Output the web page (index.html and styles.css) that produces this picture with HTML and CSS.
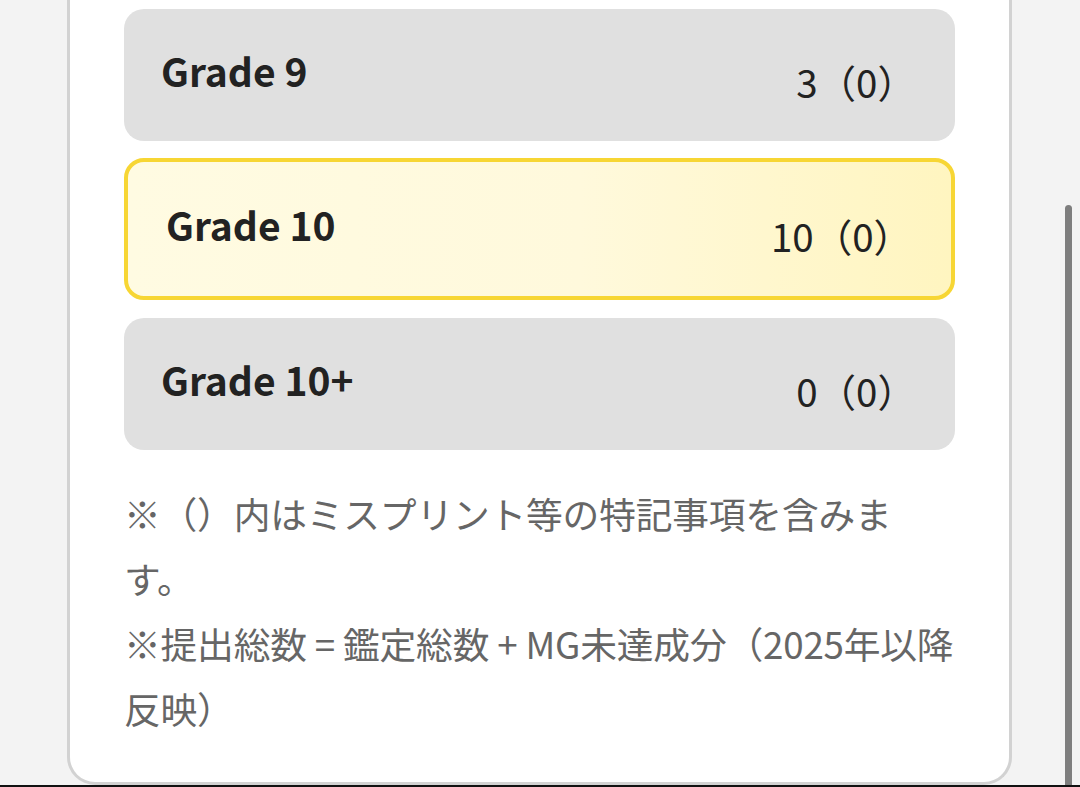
FILE: index.html
```html
<!DOCTYPE html>
<html lang="ja">
<head>
    <meta charset="UTF-8">
    <meta name="viewport" content="width=device-width, initial-scale=1.0">
    <title>Grade Breakdown</title>
    <link rel="stylesheet" href="styles.css">
</head>
<body>
    <div class="screen">
        <div class="panel">
            <ul class="grade-list">
                <li class="grade-row">
                    <span class="grade-name">Grade 9</span>
                    <span class="grade-count">3（0）</span>
                </li>
                <li class="grade-row is-current">
                    <span class="grade-name">Grade 10</span>
                    <span class="grade-count">10（0）</span>
                </li>
                <li class="grade-row">
                    <span class="grade-name">Grade 10+</span>
                    <span class="grade-count">0（0）</span>
                </li>
            </ul>

            <div class="notes">
                <p>※（）内はミスプリント等の特記事項を含みます。</p>
                <p>※提出総数 = 鑑定総数 + MG未達成分（2025年以降反映）</p>
            </div>
        </div>

        <div class="scroll-thumb"></div>
    </div>
    <div class="nav-edge"></div>
</body>
</html>
```

FILE: styles.css
```css
body {
    margin: 0;
    font-family: "Noto Sans CJK JP", "Noto Sans", sans-serif;
    color: #222222;
    background-color: #f3f3f3;
}

.screen {
    position: relative;
    height: 785px;
    overflow: hidden;
}

.panel {
    box-sizing: border-box;
    width: 945px;
    height: 785px;
    margin-left: 67px;
    padding: 9px 54px 0;
    background-color: #ffffff;
    border: 3px solid #d2d2d2;
    border-top: none;
    border-radius: 0 0 28px 28px;
}

.grade-list {
    list-style: none;
    margin: 0;
    padding: 0;
    display: flex;
    flex-direction: column;
    gap: 17px;
}

.grade-row {
    box-sizing: border-box;
    height: 132px;
    padding: 0 39px 0 37px;
    display: flex;
    justify-content: space-between;
    align-items: center;
    background-color: #e0e0e0;
    border-radius: 20px;
}

.grade-row.is-current {
    height: 142px;
    padding: 0 39px 0 38px;
    background: linear-gradient(90deg, #fffbe2 0%, #fff9dc 55%, #fff5c0 100%);
    border: 4px solid #f7d634;
}

.grade-row.is-current + .grade-row {
    margin-top: 1px;
}

.grade-name {
    font-size: 39px;
    font-weight: 700;
    line-height: 1.2;
    padding-bottom: 10px;
}

.grade-count {
    font-size: 38.5px;
    font-weight: 400;
    line-height: 1.2;
    padding-top: 13px;
}

.notes {
    margin-top: 31px;
    font-size: 36.75px;
    line-height: 65px;
    letter-spacing: -0.2px;
    text-spacing-trim: space-all;
    color: #666666;
}

.notes p {
    margin: 0;
}

.scroll-thumb {
    position: absolute;
    top: 205px;
    bottom: 0;
    right: 8px;
    width: 7px;
    background-color: #7e7e7e;
    border-radius: 4px 4px 0 0;
}

.nav-edge {
    height: 2px;
    background-color: #111111;
}
```
